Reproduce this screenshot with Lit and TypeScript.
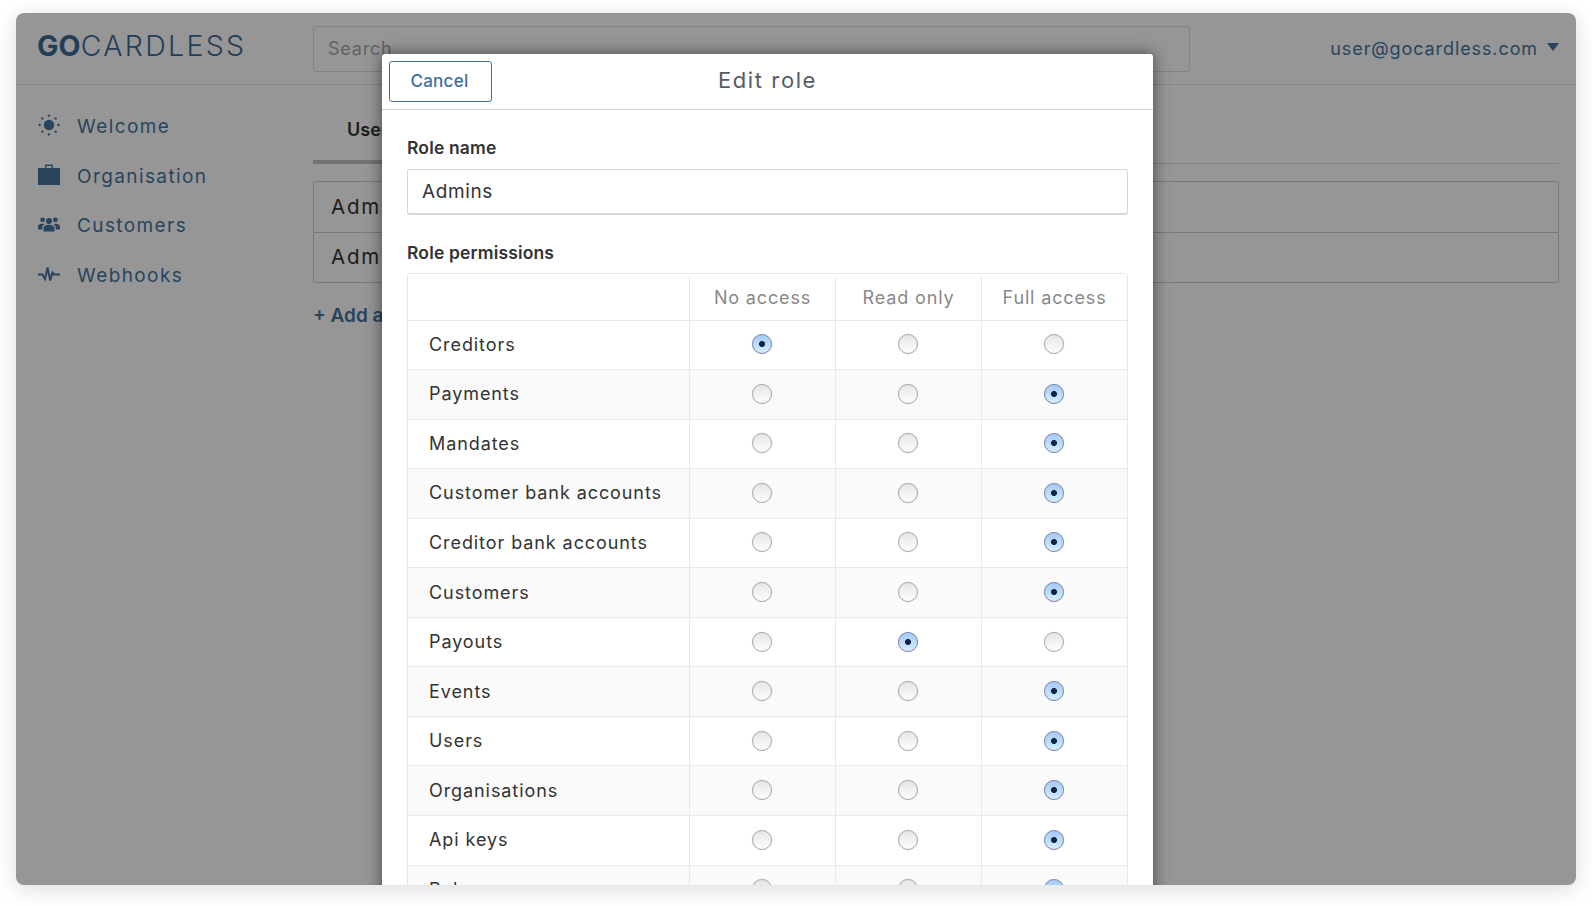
import { LitElement, css, html } from "lit";
import { customElement } from "lit/decorators.js";

type Access = "none" | "read" | "full";

const permissions: { name: string; access: Access }[] = [
  { name: "Creditors", access: "none" },
  { name: "Payments", access: "full" },
  { name: "Mandates", access: "full" },
  { name: "Customer bank accounts", access: "full" },
  { name: "Creditor bank accounts", access: "full" },
  { name: "Customers", access: "full" },
  { name: "Payouts", access: "read" },
  { name: "Events", access: "full" },
  { name: "Users", access: "full" },
  { name: "Organisations", access: "full" },
  { name: "Api keys", access: "full" },
  { name: "Roles", access: "full" },
];

const levels: Access[] = ["none", "read", "full"];

const sunIcon = html`<svg viewBox="0 0 22 22" width="22" height="22" fill="currentColor">
  <circle cx="11" cy="11" r="5.2" />
  <circle cx="11" cy="1.6" r="1.2" /><circle cx="11" cy="20.4" r="1.2" />
  <circle cx="1.6" cy="11" r="1.2" /><circle cx="20.4" cy="11" r="1.2" />
  <circle cx="4.4" cy="4.4" r="1.2" /><circle cx="17.6" cy="4.4" r="1.2" />
  <circle cx="4.4" cy="17.6" r="1.2" /><circle cx="17.6" cy="17.6" r="1.2" />
</svg>`;

const caseIcon = html`<svg viewBox="0 0 22 22" width="22" height="22" fill="currentColor">
  <path d="M7 4V1.5A1 1 0 0 1 8 .5h6a1 1 0 0 1 1 1V4h7v17H0V4zm1.4 0h5.2V2H8.4z" fill-rule="evenodd" />
</svg>`;

const peopleIcon = html`<svg viewBox="0 0 22 22" width="22" height="22" fill="currentColor">
  <circle cx="11" cy="8" r="3" /><circle cx="4.6" cy="6.8" r="2.4" /><circle cx="17.4" cy="6.8" r="2.4" />
  <path d="M5.5 18.5v-3c0-2.6 2-3.8 5.5-3.8s5.5 1.2 5.5 3.8v3z" />
  <path d="M0 16.5V14c0-2.3 1.7-3.3 4.6-3.3.8 0 1.5.1 2.1.3-1.6.9-2.4 2.4-2.4 4.3v1.2z" />
  <path d="M22 16.5V14c0-2.3-1.7-3.3-4.6-3.3-.8 0-1.5.1-2.1.3 1.6.9 2.4 2.4 2.4 4.3v1.2z" />
</svg>`;

const pulseIcon = html`<svg viewBox="0 0 22 22" width="22" height="22" fill="none" stroke="currentColor" stroke-width="2">
  <path d="M0 11.5h4.5L7 16l2.6-11.500 2.6 13 2.300-8 1.500 2H22" />
</svg>`;

@customElement("app-root")
export class AppRoot extends LitElement {
  private _nav = [
    { label: "Welcome", icon: sunIcon },
    { label: "Organisation", icon: caseIcon },
    { label: "Customers", icon: peopleIcon },
    { label: "Webhooks", icon: pulseIcon },
  ];

  render() {
    return html`
      <div class="window">
        <header class="topbar">
          <div class="logo"><b>GO</b>CARDLESS</div>
          <div class="search">Search</div>
          <div class="account">user@gocardless.com<span class="caret"></span></div>
        </header>
        <div class="body">
          <nav class="sidebar">
            ${this._nav.map(
              (item) => html`<a class="nav-item"><span class="nav-icon">${item.icon}</span>${item.label}</a>`
            )}
          </nav>
          <main class="content">
            <div class="tabs"><span class="tab">Users</span></div>
            <div class="list">
              <div class="list-row">Admins</div>
              <div class="list-row">Admins</div>
            </div>
            <a class="add">+ Add a role</a>
          </main>
        </div>
        <div class="overlay"></div>
        <section class="modal">
          <div class="modal-head">
            <button class="cancel">Cancel</button>
            <h2>Edit role</h2>
          </div>
          <div class="modal-body">
            <label class="field-label">Role name</label>
            <input class="name-input" type="text" .value=${"Admins"} />
            <label class="field-label second">Role permissions</label>
            <div class="table">
              <div class="row head">
                <div class="cell"></div>
                <div class="cell">No access</div>
                <div class="cell">Read only</div>
                <div class="cell">Full access</div>
              </div>
              ${permissions.map(
                (p) => html`<div class="row">
                  <div class="cell name">${p.name}</div>
                  ${levels.map(
                    (l) => html`<div class="cell">
                      <input class="radio" type="radio" name=${p.name} .checked=${p.access === l} />
                    </div>`
                  )}
                </div>`
              )}
            </div>
          </div>
        </section>
      </div>
    `;
  }

  static styles = css`
    :host {
      display: block;
      box-sizing: border-box;
      width: 1592px;
      height: 906px;
      padding: 13px 16px 21px;
      background: #fff;
      font-family: Inter, "Liberation Sans", sans-serif;
      color: #333;
    }
    * {
      box-sizing: border-box;
    }
    .window {
      position: relative;
      height: 872px;
      border-radius: 8px;
      overflow: hidden;
      background: #fff;
      box-shadow: 0 4px 22px rgba(0, 0, 0, 0.14);
    }
    .topbar {
      display: flex;
      align-items: center;
      height: 72px;
      padding: 0 17px 0 21px;
      border-bottom: 1px solid #e2e2e2;
    }
    .logo {
      width: 276px;
      font-size: 28.5px;
      font-weight: 300;
      color: #3d6a96;
      letter-spacing: 2.3px;
      margin-top: -6px;
    }
    .logo b {
      font-weight: 700;
      letter-spacing: 0.2px;
    }
    .search {
      display: flex;
      align-items: center;
      width: 877px;
      height: 46px;
      padding: 0 14px;
      border: 1px solid #ddd;
      border-radius: 3px;
      font-size: 18px;
      letter-spacing: 0.8px;
      color: #aaa;
    }
    .account {
      display: flex;
      align-items: center;
      margin-left: auto;
      font-size: 18px;
      letter-spacing: 0.9px;
      color: #47759f;
    }
    .caret {
      width: 0;
      height: 0;
      margin-left: 9px;
      margin-top: -3px;
      border-left: 6.5px solid transparent;
      border-right: 6.5px solid transparent;
      border-top: 8px solid #47759f;
    }
    .body {
      display: flex;
    }
    .sidebar {
      display: flex;
      flex-direction: column;
      gap: 21.6px;
      width: 297px;
      padding: 27.5px 0 0 22px;
    }
    .nav-item {
      display: flex;
      align-items: center;
      gap: 17px;
      height: 28px;
      font-size: 19px;
      letter-spacing: 1.4px;
      color: #47759f;
    }
    .nav-icon {
      display: flex;
      width: 22px;
      height: 22px;
      margin-top: -3px;
    }
    .content {
      flex: 1;
      padding: 0 17px 0 0;
    }
    .tabs {
      position: relative;
      height: 79px;
      padding: 34px 0 0 34px;
      border-bottom: 1px solid #ddd;
    }
    .tab {
      font-size: 18px;
      font-weight: 600;
      color: #333;
    }
    .tabs::after {
      content: "";
      position: absolute;
      left: 0;
      bottom: -1px;
      width: 120px;
      height: 4px;
      background: #c4c4c4;
    }
    .list {
      margin-top: 17px;
      border: 1px solid #ccc;
      border-radius: 3px;
    }
    .list-row {
      display: flex;
      align-items: center;
      height: 50px;
      padding: 0 0 2px 17px;
      font-size: 20.5px;
      letter-spacing: 1.8px;
    }
    .list-row + .list-row {
      border-top: 1px solid #ccc;
    }
    .add {
      display: block;
      margin-top: 21px;
      font-size: 19px;
      font-weight: 600;
      color: #47759f;
    }
    .overlay {
      position: absolute;
      inset: 0;
      background: rgba(0, 0, 0, 0.41);
    }
    .modal {
      position: absolute;
      left: 366px;
      top: 41px;
      width: 771px;
      height: 900px;
      border-radius: 3px 3px 0 0;
      background: #fff;
      box-shadow: 0 0 16px rgba(0, 0, 0, 0.55);
    }
    .modal-head {
      position: relative;
      display: flex;
      align-items: center;
      justify-content: center;
      height: 56px;
      border-bottom: 1px solid #d6d6d6;
    }
    .cancel {
      position: absolute;
      left: 7px;
      top: 7px;
      width: 103px;
      height: 41px;
      padding: 0 2px 2px 0;
      background: #fff;
      border: 1px solid #3d6ea0;
      border-radius: 3px;
      font: 500 17px Inter, "Liberation Sans", sans-serif;
      letter-spacing: 0.3px;
      color: #3d6ea0;
    }
    h2 {
      margin: -3px 0 0;
      font-size: 22px;
      font-weight: 400;
      letter-spacing: 1.6px;
      color: #555c66;
    }
    .modal-body {
      padding: 27px 25px 0;
    }
    .field-label {
      display: block;
      height: 22px;
      font-size: 17.5px;
      line-height: 22px;
      font-weight: 600;
      letter-spacing: 0.15px;
      color: #333;
    }
    .field-label.second {
      margin-top: 27px;
    }
    .name-input {
      display: block;
      width: 100%;
      height: 46px;
      margin-top: 10px;
      padding: 0 14px;
      border: 1px solid #d3d6dc;
      border-bottom-width: 2px;
      border-radius: 3px;
      font: 400 19px Inter, "Liberation Sans", sans-serif;
      letter-spacing: 0.6px;
      color: #333;
      outline: none;
    }
    .table {
      margin-top: 9px;
      border: 1.5px solid #e6e6e6;
      border-radius: 3px 3px 0 0;
    }
    .row {
      display: grid;
      grid-template-columns: 281px 146px 146px 1fr;
      height: 49.55px;
      border-bottom: 1.5px solid #e9e9e9;
    }
    .row.head {
      height: 46.5px;
      padding-top: 2px;
      background: #fff;
      color: #888;
      font-size: 18px;
      letter-spacing: 0.85px;
    }
    .row:nth-child(odd):not(.head) {
      background: #fafafa;
    }
    .cell {
      display: flex;
      align-items: center;
      justify-content: center;
      border-left: 1.5px solid #e9e9e9;
    }
    .cell:first-child {
      border-left: 0;
    }
    .cell.name {
      justify-content: flex-start;
      padding: 0 0 1px 21px;
      font-size: 18px;
      letter-spacing: 0.92px;
      color: #333;
    }
    .radio {
      appearance: none;
      width: 20px;
      height: 20px;
      margin: 0 2px 1px 0;
      border-radius: 50%;
      border: 1.5px solid #a9a9a9;
      background: linear-gradient(#e6e6e6, #fdfdfd);
      box-shadow: 0 0 1px rgba(0, 0, 0, 0.25);
    }
    .radio:checked {
      border-color: #7d84ad;
      background: radial-gradient(circle at 50% 50%, #0d2440 0, #0d2440 2.6px, transparent 3.4px),
        linear-gradient(#a6c9f5, #bfe0fd 60%, #d4eefe);
    }
  `;
}
